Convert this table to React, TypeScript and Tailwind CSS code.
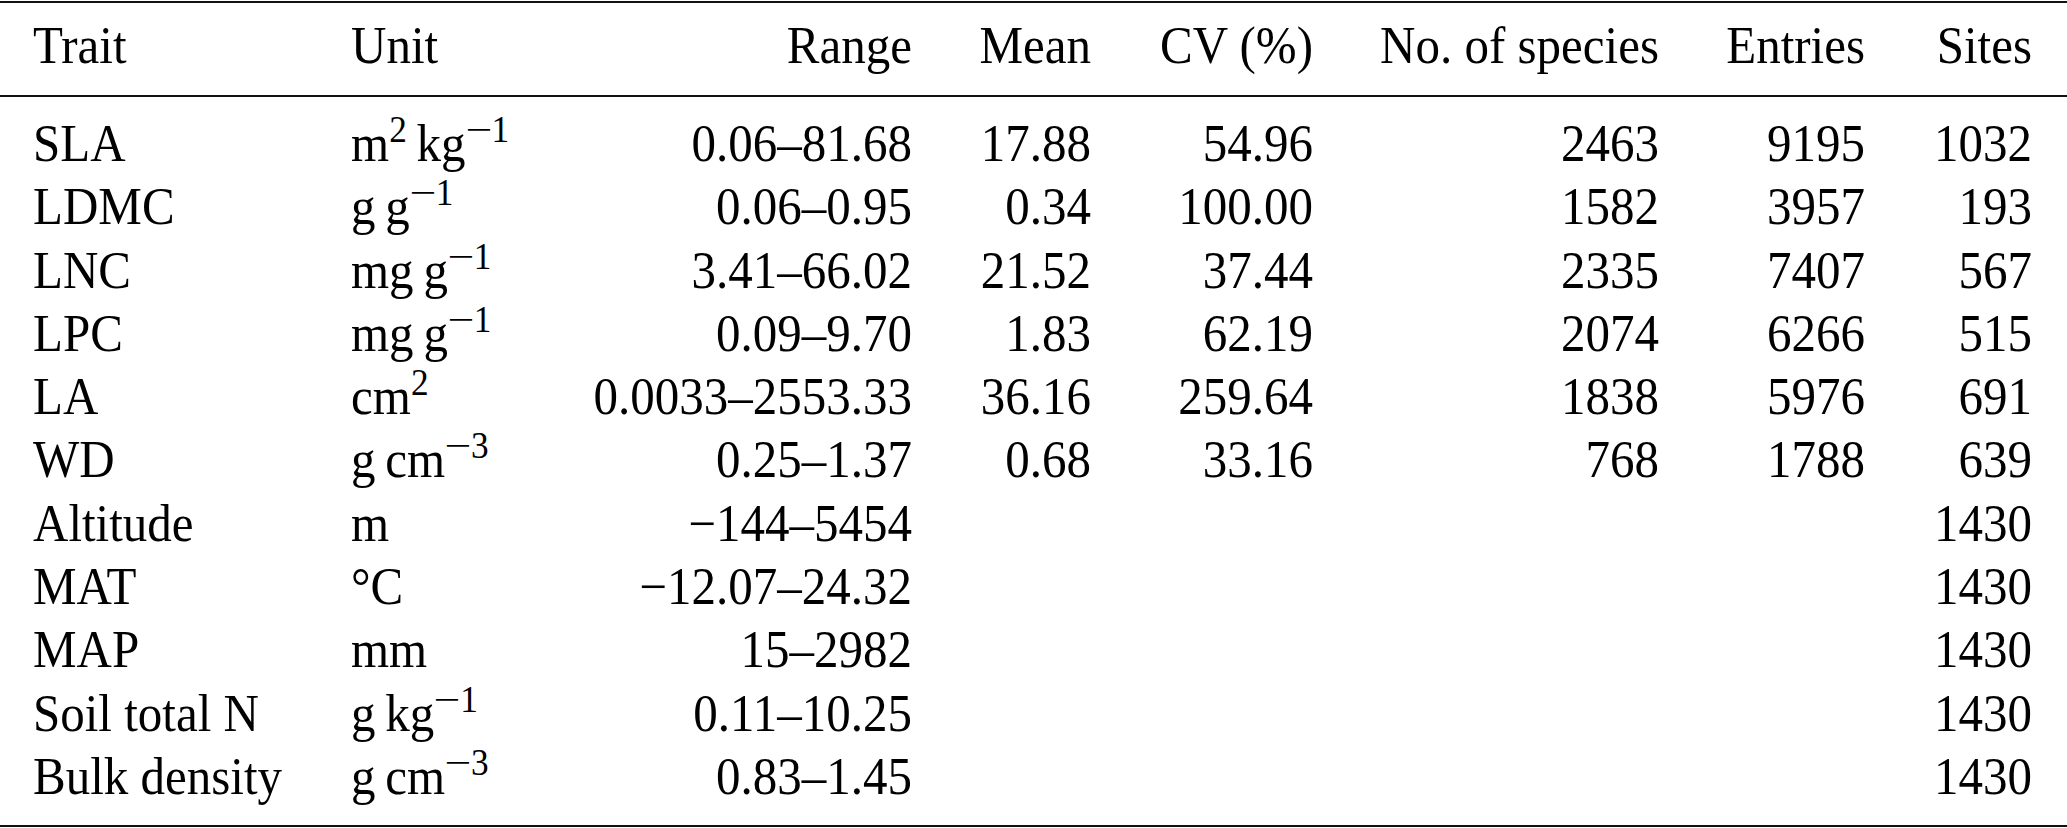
import React from "react";

// trait summary table, booktabs style
const cols =
  "grid grid-cols-[351px_209px_352px_179px_222px_346px_206px_167px] [&>div]:scale-y-[1.06]";

type Row = {
  trait: string;
  unit: React.ReactNode;
  range: string;
  mean?: string;
  cv?: string;
  species?: string;
  entries?: string;
  sites: string;
};

const T = "\u2009";

// superscript exponent, LaTeX style long minus
const Exp = ({ n, neg }: { n: string; neg?: boolean }) => (
  <sup className="text-[0.72em]">
    {neg && <span className="inline-block scale-x-[1.35] mx-[3px]">{"\u2212"}</span>}
    {n}
  </sup>
);

const rows: Row[] = [
  {
    trait: "SLA",
    unit: (
      <>
        m<Exp n="2" />
        {T}kg<Exp n="1" neg />
      </>
    ),
    range: "0.06–81.68",
    mean: "17.88",
    cv: "54.96",
    species: "2463",
    entries: "9195",
    sites: "1032",
  },
  {
    trait: "LDMC",
    unit: (
      <>
        g{T}g<Exp n="1" neg />
      </>
    ),
    range: "0.06–0.95",
    mean: "0.34",
    cv: "100.00",
    species: "1582",
    entries: "3957",
    sites: "193",
  },
  {
    trait: "LNC",
    unit: (
      <>
        mg{T}g<Exp n="1" neg />
      </>
    ),
    range: "3.41–66.02",
    mean: "21.52",
    cv: "37.44",
    species: "2335",
    entries: "7407",
    sites: "567",
  },
  {
    trait: "LPC",
    unit: (
      <>
        mg{T}g<Exp n="1" neg />
      </>
    ),
    range: "0.09–9.70",
    mean: "1.83",
    cv: "62.19",
    species: "2074",
    entries: "6266",
    sites: "515",
  },
  {
    trait: "LA",
    unit: (
      <>
        cm<Exp n="2" />
      </>
    ),
    range: "0.0033–2553.33",
    mean: "36.16",
    cv: "259.64",
    species: "1838",
    entries: "5976",
    sites: "691",
  },
  {
    trait: "WD",
    unit: (
      <>
        g{T}cm<Exp n="3" neg />
      </>
    ),
    range: "0.25–1.37",
    mean: "0.68",
    cv: "33.16",
    species: "768",
    entries: "1788",
    sites: "639",
  },
  { trait: "Altitude", unit: "m", range: "\u2212144–5454", sites: "1430" },
  { trait: "MAT", unit: "°C", range: "\u221212.07–24.32", sites: "1430" },
  { trait: "MAP", unit: "mm", range: "15–2982", sites: "1430" },
  {
    trait: "Soil total N",
    unit: (
      <>
        g{T}kg<Exp n="1" neg />
      </>
    ),
    range: "0.11–10.25",
    sites: "1430",
  },
  {
    trait: "Bulk density",
    unit: (
      <>
        g{T}cm<Exp n="3" neg />
      </>
    ),
    range: "0.83–1.45",
    sites: "1430",
  },
];

export default function App() {
  return (
    <div className="w-[2067px] h-[828px] bg-white text-black font-['Liberation_Serif','Times_New_Roman',serif] text-[49px] whitespace-nowrap">
      <div className="mt-px border-t-2 border-[#111]" />

      <div className={`${cols} pt-[11px] pb-[18px] leading-[63px]`}>
        <div className="pl-[33px]">Trait</div>
        <div>Unit</div>
        <div className="text-right">Range</div>
        <div className="text-right">Mean</div>
        <div className="text-right">CV (%)</div>
        <div className="text-right">No. of species</div>
        <div className="text-right">Entries</div>
        <div className="text-right">Sites</div>
      </div>

      <div className="border-t-2 border-[#111]" />

      <div className="pt-[15px] pb-[17px]">
        {rows.map((r) => (
          <div key={r.trait} className={`${cols} leading-[63.3px]`}>
            <div className="pl-[33px]">{r.trait}</div>
            <div>{r.unit}</div>
            <div className="text-right">{r.range}</div>
            <div className="text-right">{r.mean}</div>
            <div className="text-right">{r.cv}</div>
            <div className="text-right">{r.species}</div>
            <div className="text-right">{r.entries}</div>
            <div className="text-right">{r.sites}</div>
          </div>
        ))}
      </div>

      <div className="border-t-2 border-[#111]" />
    </div>
  );
}
